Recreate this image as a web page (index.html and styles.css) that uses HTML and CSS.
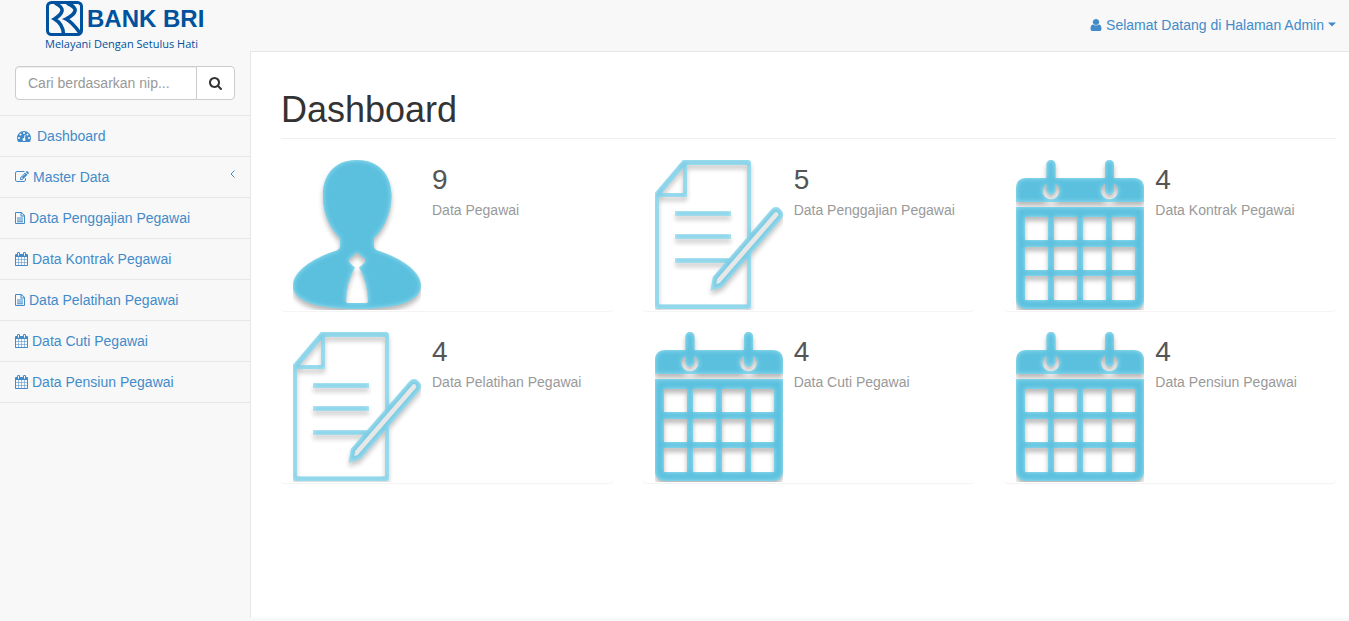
FILE: index.html
```html
<!DOCTYPE html>
<html lang="id">
<head>
<meta charset="utf-8">
<title>Dashboard - Bank BRI</title>
<link rel="stylesheet" href="styles.css">
</head>
<body>
<svg class="defs" width="0" height="0" aria-hidden="true">
  <defs>
    <filter id="soft" x="-10%" y="-10%" width="120%" height="120%" color-interpolation-filters="sRGB">
      <feGaussianBlur in="SourceAlpha" stdDeviation="2.5" result="b"/>
      <feOffset in="b" dy="4" result="o"/>
      <feComponentTransfer in="o" result="shadow"><feFuncA type="linear" slope=".28"/></feComponentTransfer>
      <feComponentTransfer in="SourceAlpha" result="inv"><feFuncA type="table" tableValues="1 0"/></feComponentTransfer>
      <feGaussianBlur in="inv" stdDeviation="2.5" result="ib"/>
      <feFlood flood-color="#a4e4f4" result="f"/>
      <feComposite in="f" in2="ib" operator="in" result="g"/>
      <feComposite in="g" in2="SourceAlpha" operator="in" result="glow"/>
      <feMerge><feMergeNode in="shadow"/><feMergeNode in="SourceGraphic"/><feMergeNode in="glow"/></feMerge>
    </filter>
    <symbol id="calendar" viewBox="64 0 1664 1792"><path d="M192 1664h288v-288h-288v288zm352 0h320v-288h-320v288zm-352-352h288v-320h-288v320zm352 0h320v-320h-320v320zm-352-384h288v-288h-288v288zm736 736h320v-288h-320v288zm-384-736h320v-288h-320v288zm768 736h288v-288h-288v288zm-384-352h320v-320h-320v320zm-352-864v-288q0-13-9.500-22.500t-22.500-9.500h-64q-13 0-22.500 9.500t-9.500 22.500v288q0 13 9.500 22.500t22.500 9.500h64q13 0 22.500-9.500t9.500-22.500zm736 864h288v-320h-288v320zm-384-384h320v-288h-320v288zm384 0h288v-288h-288v288zm32-480v-288q0-13-9.500-22.500t-22.500-9.500h-64q-13 0-22.500 9.500t-9.500 22.500v288q0 13 9.500 22.500t22.500 9.500h64q13 0 22.500-9.500t9.500-22.500zm384-64v1280q0 52-38 90t-90 38h-1408q-52 0-90-38t-38-90v-1280q0-52 38-90t90-38h128v-96q0-66 47-113t113-47h64q66 0 113 47t47 113v96h384v-96q0-66 47-113t113-47h64q66 0 113 47t47 113v96h128q52 0 90 38t38 90z"/></symbol>
    <symbol id="file" viewBox="0 0 10 12"><path fill-rule="evenodd" d="M1 0H6.500L10 3.500V11Q10 12 9 12H1Q0 12 0 11V1Q0 0 1 0ZM1 1V11H9V4.500H5.500V1ZM6.500 1.200V3.500H8.800ZM2 5.500H8V6.500H2ZM2 7.500H8V8.500H2ZM2 9.300H8V10.200H2Z"/></symbol>
    <g id="big-calendar" filter="url(#soft)" fill="#5bc0de">
      <path fill-rule="evenodd" d="M0 42V29Q0 18 11 18H117Q128 18 128 29V42ZM26.500 31a8.500 8.500 0 0 0 17 0a8.500 8.500 0 0 0-17 0ZM85 31a8.500 8.500 0 0 0 17 0a8.500 8.500 0 0 0-17 0Z"/>
      <path d="M30.500 4.500a4.500 4.500 0 0 1 9 0V30a4.500 4.500 0 0 1-9 0ZM89 4.500a4.500 4.500 0 0 1 9 0V30a4.500 4.500 0 0 1-9 0Z"/>
      <path fill-rule="evenodd" d="M0 47H128V138Q128 149 117 149H11Q0 149 0 138ZM9 57v23h23V57ZM38 57v23h23V57ZM67 57v23h23V57ZM96 57v23h23V57ZM9 87v23h23V87ZM38 87v23h23V87ZM67 87v23h23V87ZM96 87v23h23V87ZM9 116v24h23V116ZM38 116v24h23V116ZM67 116v24h23V116ZM96 116v24h23V116Z"/>
    </g>
    <g id="big-note" filter="url(#soft)" fill="none" stroke="#5bc0de" stroke-width="4.500">
      <path fill-rule="evenodd" stroke="none" fill="#5bc0de" d="M28 0H94L96 2V147L94 149H2L0 147V33ZM32 5V37H4V144.500H92V5ZM28 8L7 33H28Z"/>
      <path d="M20 53.500H76M20 76.500H76M20 100.500H76"/>
      <path fill="#e2e2e2" d="M58.500 127.500L60 118 118 51q3-3 6 0t1 6L66 125Z"/>
    </g>
  </defs>
</svg>

<div class="layout">
  <aside class="sidebar">
    <a class="brand" href="#" aria-label="Bank BRI">
      <span class="brand-row">
        <svg class="brand-mark" viewBox="0 0 37 35" aria-hidden="true">
          <rect x="1.500" y="1.500" width="34" height="32" rx="4" fill="none" stroke="#00519e" stroke-width="3"/>
          <path d="M9 2Q17 6 16 10T8.500 18Q17 23 17.500 33M21 2Q30 6 29 10T20 18Q26 21 34 32" fill="none" stroke="#00519e" stroke-width="3.600"/>
        </svg>
        <span class="brand-name">BANK BRI</span>
      </span>
      <span class="brand-tag">Melayani Dengan Setulus Hati</span>
    </a>
    <form class="search" role="search">
      <input type="text" placeholder="Cari berdasarkan nip..." aria-label="Cari berdasarkan nip">
      <button type="button" aria-label="Cari">
        <svg width="13" height="13" viewBox="64 128 1664 1664"><path d="M1216 832q0-185-131.500-316.500t-316.500-131.500-316.500 131.500-131.500 316.500 131.500 316.500 316.500 131.500 316.500-131.500 131.500-316.500zm512 832q0 52-38 90t-90 38q-54 0-90-38l-343-342q-179 124-399 124-143 0-273.500-55.500t-225-150-150-225-55.500-273.500 55.500-273.500 150-225 225-150 273.500-55.500 273.500 55.500 225 150 150 225 55.500 273.500q0 220-124 399l343 343q37 37 37 90z"/></svg>
      </button>
    </form>
    <nav class="menu">
      <a href="#"><svg width="18" height="14" viewBox="-256 0 2304 1792"><path d="M384 1152q0-53-37.500-90.500t-90.500-37.500-90.500 37.500-37.500 90.500 37.500 90.500 90.500 37.500 90.500-37.500 37.500-90.500zm192-448q0-53-37.500-90.500t-90.500-37.500-90.500 37.500-37.500 90.500 37.500 90.500 90.500 37.500 90.500-37.500 37.500-90.500zm428 481l101-382q6-26-7.500-48.500t-38.500-29.500-48 6.500-30 39.500l-101 382q-60 5-107 43.500t-63 98.500q-20 77 20 146t117 89 146-20 89-117q16-60-6-117t-72-91zm660-33q0-53-37.500-90.500t-90.500-37.500-90.500 37.500-37.500 90.500 37.500 90.500 90.500 37.500 90.500-37.500 37.500-90.500zm-640-640q0-53-37.500-90.500t-90.500-37.500-90.500 37.500-37.500 90.500 37.500 90.500 90.500 37.500 90.500-37.500 37.500-90.500zm448 192q0-53-37.500-90.500t-90.500-37.500-90.500 37.500-37.500 90.500 37.500 90.500 90.500 37.500 90.500-37.500 37.500-90.500zm320 448q0 261-141 483-19 29-54 29h-1402q-35 0-54-29-141-221-141-483 0-182 71-348t191-286 286-191 348-71 348 71 286 191 191 286 71 348z"/></svg>Dashboard</a>
      <a href="#"><svg width="14" height="14" viewBox="0 0 1792 1792"><path d="M888 1184l116-116-152-152-116 116v56h96v96h56zm440-720q-16-16-33 1l-350 350q-17 17-1 33t33-1l350-350q17-17 1-33zm80 594v190q0 119-84.500 203.500t-203.500 84.500h-832q-119 0-203.500-84.500t-84.500-203.500v-832q0-119 84.500-203.500t203.500-84.500h832q63 0 117 25 15 7 18 23 3 17-9 29l-49 49q-14 14-32 8-23-6-45-6h-832q-66 0-113 47t-47 113v832q0 66 47 113t113 47h832q66 0 113-47t47-113v-126q0-13 9-22l64-64q15-15 35-7t20 29zm-96-738l288 288-672 672h-288v-288zm444 132l-92 92-288-288 92-92q28-28 68-28t68 28l152 152q28 28 28 68t-28 68z"/></svg>Master Data<svg class="arrow" width="5" height="8" viewBox="0 0 5 8"><path d="M4.500.5L1 4l3.500 3.500" fill="none" stroke="currentColor"/></svg></a>
      <a href="#"><svg width="10" height="12"><use href="#file"/></svg>Data Penggajian Pegawai</a>
      <a href="#"><svg width="13" height="14"><use href="#calendar"/></svg>Data Kontrak Pegawai</a>
      <a href="#"><svg width="10" height="12"><use href="#file"/></svg>Data Pelatihan Pegawai</a>
      <a href="#"><svg width="13" height="14"><use href="#calendar"/></svg>Data Cuti Pegawai</a>
      <a href="#"><svg width="13" height="14"><use href="#calendar"/></svg>Data Pensiun Pegawai</a>
    </nav>
  </aside>

  <div class="page">
    <header class="topbar">
      <a href="#"><svg width="12" height="14" viewBox="192 0 1408 1792" preserveAspectRatio="none"><path d="M1536 1399q0 109-62.500 187t-150.500 78h-854q-88 0-150.500-78t-62.500-187q0-85 8.500-160.500t31.500-152 58.500-131 94-89 134.500-34.500q131 128 313 128t313-128q76 0 134.500 34.500t94 89 58.500 131 31.500 152 8.500 160.500zm-256-887q0 159-112.500 271.500t-271.500 112.500-271.500-112.500-112.500-271.500 112.500-271.500 271.500-112.500 271.500 112.500 112.500 271.500z"/></svg>Selamat Datang di Halaman Admin<svg width="8" height="5" viewBox="0 0 8 5"><path d="M0 .5h8L4 4.500z"/></svg></a>
    </header>
    <main class="content">
      <h1>Dashboard</h1>
      <div class="cards">
        <section class="card">
          <svg class="picture" viewBox="0 0 128 150" aria-hidden="true"><path filter="url(#soft)" fill="#5bc0de" fill-rule="evenodd" d="M64 0C87 0 99 16 98.500 37C98 55 90 70 81 78V87Q82 90 86 91C110 99 128 112 128 126C128 143 98 149 64 149S0 143 0 126C0 112 18 99 42 91Q46 90 47 87V78C38 70 30 55 30 37C29 16 41 0 64 0ZM64 92Q61 96 56 99V102L61 107H62Q53 123 53 142L54 143H74L75 142Q75 123 66 107H67L72 102V99Q67 96 64 92Z"/></svg>
          <div><strong>9</strong><p>Data Pegawai</p></div>
        </section>
        <section class="card">
          <svg class="picture" viewBox="0 0 128 150" aria-hidden="true"><use href="#big-note" opacity=".8"/></svg>
          <div><strong>5</strong><p>Data Penggajian Pegawai</p></div>
        </section>
        <section class="card">
          <svg class="picture" viewBox="0 0 128 150" aria-hidden="true"><use href="#big-calendar"/></svg>
          <div><strong>4</strong><p>Data Kontrak Pegawai</p></div>
        </section>
        <section class="card">
          <svg class="picture" viewBox="0 0 128 150" aria-hidden="true"><use href="#big-note" opacity=".8"/></svg>
          <div><strong>4</strong><p>Data Pelatihan Pegawai</p></div>
        </section>
        <section class="card">
          <svg class="picture" viewBox="0 0 128 150" aria-hidden="true"><use href="#big-calendar"/></svg>
          <div><strong>4</strong><p>Data Cuti Pegawai</p></div>
        </section>
        <section class="card">
          <svg class="picture" viewBox="0 0 128 150" aria-hidden="true"><use href="#big-calendar"/></svg>
          <div><strong>4</strong><p>Data Pensiun Pegawai</p></div>
        </section>
      </div>
    </main>
  </div>
</div>
</body>
</html>
```
FILE: styles.css
```css
* { box-sizing: border-box; }
body {
  margin: 0;
  background: #f8f8f8;
  color: #333;
  font: 14px/20px "Liberation Sans", Arial, sans-serif;
}
a { color: #428bca; text-decoration: none; }
svg { fill: currentColor; flex: none; }
.defs { position: absolute; }
.layout { display: grid; grid-template-columns: 250px 1fr; min-height: 100vh; padding-bottom: 3px; }

.brand { display: flex; flex-direction: column; height: 51px; padding: 1px 0 0 45px; color: #00519e; }
.brand-row { display: flex; align-items: center; gap: 4px; height: 35px; padding-left: 1px; }
.brand-mark { width: 37px; height: 35px; }
.brand-name { font: bold 24px/34px "Liberation Sans", Arial, sans-serif; }
.brand-tag { font: 500 11px/15px "Open Sans", sans-serif; white-space: nowrap; }

.search { display: flex; padding: 15px; }
.search input {
  flex: 1; min-width: 0; height: 34px; padding: 6px 12px;
  border: 1px solid #ccc; border-radius: 4px 0 0 4px;
  background: #fff; color: #555; font: inherit;
  box-shadow: inset 0 1px 1px rgba(0, 0, 0, .075);
}
.search input::placeholder { color: #999; opacity: 1; }
.search button {
  display: flex; align-items: center; justify-content: center;
  width: 39px; margin-left: -1px; padding: 0;
  border: 1px solid #ccc; border-radius: 0 4px 4px 0;
  background: #fff; color: #333;
}

.menu { border-top: 1px solid #e7e7e7; }
.menu a { display: flex; align-items: center; gap: 4px; height: 41px; padding: 0 15px; border-bottom: 1px solid #e7e7e7; }
.menu .arrow { margin: 0 0 6px auto; }

.page { display: flex; flex-direction: column; }
.topbar { display: flex; align-items: center; justify-content: flex-end; height: 51px; padding: 0 13px 2px 0; }
.topbar a { display: flex; align-items: center; gap: 4px; }
.content { flex: 1; padding: 38px 13px 0 30px; border: solid #e7e7e7; border-width: 1px 0 0 1px; background: #fff; }
h1 { margin: 0 0 20px; padding-bottom: 8px; border-bottom: 1px solid #eee; font-size: 36px; font-weight: 400; line-height: 40px; }
.cards { display: grid; grid-template-columns: repeat(3, 1fr); gap: 20px 30px; }
.card {
  display: flex; gap: 11px; padding: 1px 12px;
  border-radius: 4px; background: #fff;
  box-shadow: 0 1px 1px rgba(0, 0, 0, .05);
}
.picture { width: 128px; height: 150px; }
.card strong { display: block; padding-top: 4px; color: #555; font-size: 28px; font-weight: 400; line-height: 32px; }
.card p { margin: 4px 0 0; color: #999; }
```
